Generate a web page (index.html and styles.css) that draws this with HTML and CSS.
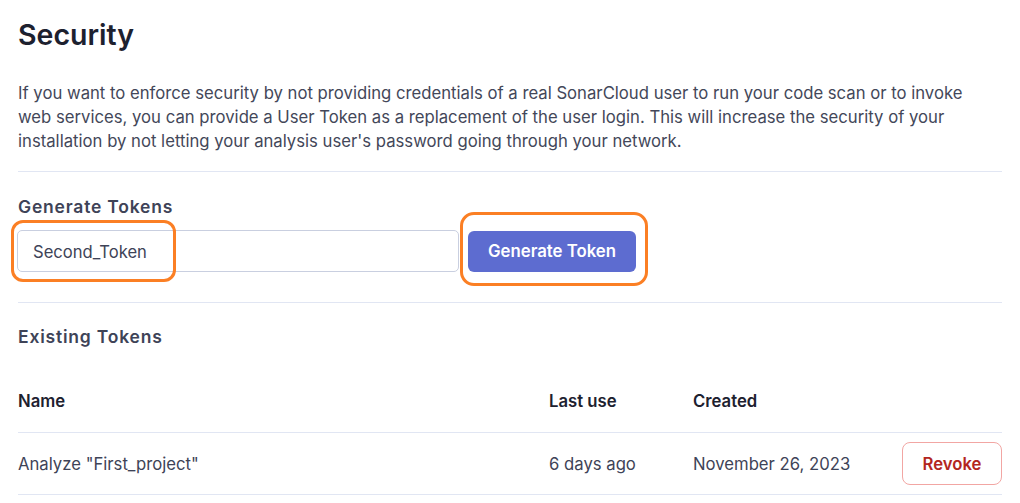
FILE: index.html
```html
<!DOCTYPE html>
<html lang="en">
<head>
<meta charset="utf-8">
<title>Security</title>
<link rel="stylesheet" href="styles.css">
</head>
<body>
<main class="page">
  <h1 class="title">Security</h1>
  <p class="intro">If you want to enforce security by not providing credentials of a real SonarCloud user to run your code scan or to invoke web services, you can provide a User Token as a replacement of the user login. This will increase the security of your installation by not letting your analysis user's password going through your network.</p>
  <hr class="divider divider-top">
  <section class="generate">
    <h2 class="section-title">Generate Tokens</h2>
    <form class="gen-form">
      <div class="field">
        <input class="token-input" type="text" value="Second_Token">
        <span class="mark mark-input"></span>
      </div>
      <div class="field">
        <button type="button" class="btn-primary">Generate Token</button>
        <span class="mark mark-button"></span>
      </div>
    </form>
  </section>
  <hr class="divider divider-mid">
  <section class="existing">
    <h2 class="section-title">Existing Tokens</h2>
    <div class="table">
      <div class="row head">
        <div class="cell">Name</div>
        <div class="cell">Last use</div>
        <div class="cell">Created</div>
        <div class="cell"></div>
      </div>
      <div class="row body">
        <div class="cell">Analyze "First_project"</div>
        <div class="cell">6 days ago</div>
        <div class="cell">November 26, 2023</div>
        <div class="cell actions"><button type="button" class="btn-danger">Revoke</button></div>
      </div>
    </div>
  </section>
</main>
</body>
</html>
```

FILE: styles.css
```css
* { box-sizing: border-box; }

body {
  margin: 0;
  background: #ffffff;
  font-family: Inter, "Noto Sans", sans-serif;
  color: #3e4357;
}

.page {
  padding: 15px 18px 0 18px;
}

.title {
  margin: 0 0 26px;
  font-size: 28.5px;
  line-height: 40px;
  font-weight: 600;
  color: #1d212f;
}

.intro {
  margin: 0 0 18px;
  padding-right: 30px;
  font-size: 16.7px;
  line-height: 24px;
  color: #434759;
}

.divider {
  border: 0;
  border-top: 1px solid #e1e6f3;
  margin: 0;
}

.generate {
  padding-top: 23px;
}

.section-title {
  margin: 0;
  font-size: 17.5px;
  line-height: 24px;
  font-weight: 600;
  letter-spacing: 0.8px;
  color: #3e4357;
}

.gen-form {
  display: flex;
  align-items: center;
  gap: 9px;
  margin: 11px 0 30px;
}

.field {
  position: relative;
}

.token-input {
  display: block;
  width: 442px;
  height: 42px;
  margin-left: -1px;
  padding: 1px 15px 0;
  border: 1px solid #c9cfe0;
  border-radius: 5px;
  font-family: inherit;
  font-size: 16.6px;
  color: #3e4357;
  background: #fff;
  outline: none;
}

.btn-primary {
  display: block;
  width: 168px;
  height: 41px;
  padding-top: 1px;
  border: 0;
  border-radius: 6px;
  background: #5d6cd0;
  color: #ffffff;
  font-family: inherit;
  font-size: 16.8px;
  font-weight: 600;
  cursor: pointer;
}

.mark {
  position: absolute;
  border: 3px solid #fb7f24;
  border-radius: 12px;
  pointer-events: none;
}

.mark-input {
  left: -7px;
  top: -10px;
  width: 165px;
  height: 62px;
}

.mark-button {
  left: -8px;
  top: -19px;
  width: 188px;
  height: 74px;
  border-radius: 14px;
}

.existing {
  padding-top: 22px;
}

.existing .section-title {
  margin-bottom: 20px;
}

.table {
  display: flex;
  flex-direction: column;
}

.row {
  display: grid;
  grid-template-columns: 531px 144px 1fr auto;
  align-items: center;
  border-bottom: 1px solid #e1e6f3;
}

.row.head {
  height: 64px;
  font-weight: 600;
  color: #1d212f;
}

.row.body {
  padding: 9px 0 9px;
  color: #3e4357;
}

.cell {
  font-size: 16.7px;
  line-height: 24px;
}

.btn-danger {
  display: block;
  width: 100px;
  height: 43px;
  border: 1px solid #f2a6a3;
  border-radius: 8px;
  background: #ffffff;
  color: #b3261e;
  font-family: inherit;
  font-size: 16.7px;
  font-weight: 600;
  cursor: pointer;
}
```
